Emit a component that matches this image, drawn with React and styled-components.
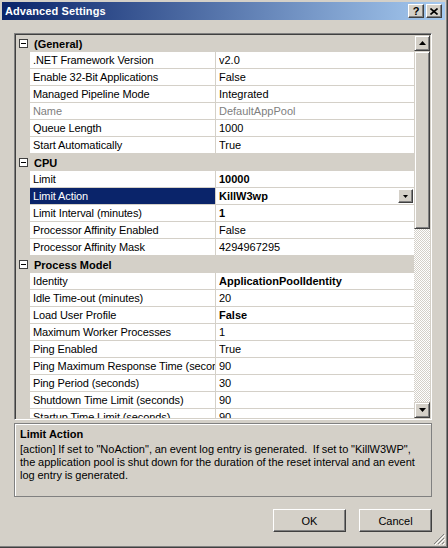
import React from "react";
import styled, { createGlobalStyle } from "styled-components";

const sections = [
  {
    title: "(General)",
    rows: [
      { name: ".NET Framework Version", value: "v2.0" },
      { name: "Enable 32-Bit Applications", value: "False" },
      { name: "Managed Pipeline Mode", value: "Integrated" },
      { name: "Name", value: "DefaultAppPool", disabled: true },
      { name: "Queue Length", value: "1000" },
      { name: "Start Automatically", value: "True" },
    ],
  },
  {
    title: "CPU",
    rows: [
      { name: "Limit", value: "10000", bold: true },
      { name: "Limit Action", value: "KillW3wp", bold: true, selected: true },
      { name: "Limit Interval (minutes)", value: "1", bold: true },
      { name: "Processor Affinity Enabled", value: "False" },
      { name: "Processor Affinity Mask", value: "4294967295" },
    ],
  },
  {
    title: "Process Model",
    rows: [
      { name: "Identity", value: "ApplicationPoolIdentity", bold: true },
      { name: "Idle Time-out (minutes)", value: "20" },
      { name: "Load User Profile", value: "False", bold: true },
      { name: "Maximum Worker Processes", value: "1" },
      { name: "Ping Enabled", value: "True" },
      { name: "Ping Maximum Response Time (seconds)", value: "90" },
      { name: "Ping Period (seconds)", value: "30" },
      { name: "Shutdown Time Limit (seconds)", value: "90" },
      { name: "Startup Time Limit (seconds)", value: "90" },
    ],
  },
];

const GlobalStyle = createGlobalStyle`
  body {
    margin: 0;
    background: #d4d0c8;
    font-family: "Liberation Sans", Arial, sans-serif;
    font-size: 11px;
  }
`;

const ArrowUp = () => (
  <svg width="7" height="4" viewBox="0 0 7 4">
    <path d="M3.5 0 L7 4 L0 4 Z" fill="#000" />
  </svg>
);

const ArrowDown = ({ size = 7 }) => (
  <svg width={size} height={Math.ceil(size / 2)} viewBox="0 0 7 4">
    <path d="M0 0 L7 0 L3.5 4 Z" fill="#000" />
  </svg>
);

const App = () => {
  return (
    <>
      <GlobalStyle />
      <Window>
        <TitleBar>
          <Title>Advanced Settings</Title>
          <TitleButtons>
            <CaptionButton>?</CaptionButton>
            <CaptionButton>
              <svg width="8" height="7" viewBox="0 0 8 7">
                <path d="M0.5 0.5 L7.5 6.5 M7.5 0.5 L0.5 6.5" stroke="#000" strokeWidth="1.6" />
              </svg>
            </CaptionButton>
          </TitleButtons>
        </TitleBar>

        <Body>
          <Grid>
            <Rows>
              {sections.map((section) => (
                <React.Fragment key={section.title}>
                  <CategoryRow>
                    <Margin>
                      <Toggle />
                    </Margin>
                    <CategoryLabel>{section.title}</CategoryLabel>
                  </CategoryRow>
                  {section.rows.map((row) => (
                    <PropRow key={row.name}>
                      <Margin />
                      <NameCell $selected={row.selected} $disabled={row.disabled}>
                        {row.name}
                      </NameCell>
                      <ValueCell $bold={row.bold} $disabled={row.disabled}>
                        <ValueText>{row.value}</ValueText>
                        {row.selected && (
                          <DropButton>
                            <ArrowDown size={5} />
                          </DropButton>
                        )}
                      </ValueCell>
                    </PropRow>
                  ))}
                </React.Fragment>
              ))}
            </Rows>
            <ScrollBar>
              <ScrollButton>
                <ArrowUp />
              </ScrollButton>
              <Thumb />
              <Track />
              <ScrollButton>
                <ArrowDown />
              </ScrollButton>
            </ScrollBar>
          </Grid>

          <Description>
            <DescTitle>Limit Action</DescTitle>
            <DescText>
              [action] If set to "NoAction", an event log entry is generated.&nbsp; If set to "KillW3WP",
              the application pool is shut down for the duration of the reset interval and an event
              log entry is generated.
            </DescText>
          </Description>

          <Footer>
            <Button>OK</Button>
            <Button>Cancel</Button>
          </Footer>
        </Body>
        <Grip>
          <svg width="12" height="12" viewBox="0 0 12 12">
            <path d="M11 1 L1 11 M11 5 L5 11 M11 9 L9 11" stroke="#808080" strokeWidth="1" />
            <path d="M12 2 L2 12 M12 6 L6 12 M12 10 L10 12" stroke="#fff" strokeWidth="1" />
          </svg>
        </Grip>
      </Window>
    </>
  );
};

const Window = styled.div`
  position: relative;
  width: 448px;
  height: 548px;
  box-sizing: border-box;
  border-right: 1px solid #404040;
  border-bottom: 1px solid #404040;
  box-shadow: inset -1px -1px 0 #808080;
  background: #d4d0c8;
  display: flex;
  flex-direction: column;
  overflow: hidden;
`;

const TitleBar = styled.div`
  height: 18px;
  margin: 2px 2px 0 2px;
  display: flex;
  align-items: center;
  justify-content: space-between;
  padding: 0 3px 0 3px;
  background: linear-gradient(to right, #0a246a 0%, #a6caf0 100%);
`;

const Title = styled.div`
  color: #fff;
  font-weight: bold;
  font-size: 11px;
  letter-spacing: 0.1px;
`;

const TitleButtons = styled.div`
  display: flex;
  gap: 2px;
`;

const CaptionButton = styled.div`
  width: 16px;
  height: 14px;
  box-sizing: border-box;
  background: #d4d0c8;
  border-top: 1px solid #fff;
  border-left: 1px solid #fff;
  border-right: 1px solid #404040;
  border-bottom: 1px solid #404040;
  box-shadow: inset -1px -1px 0 #808080;
  display: flex;
  align-items: center;
  justify-content: center;
  font-weight: bold;
  font-size: 11px;
  color: #000;
`;

const Body = styled.div`
  flex: 1;
  display: flex;
  flex-direction: column;
  padding: 13px 15px 0 14px;
`;

const Grid = styled.div`
  height: 387px;
  box-sizing: border-box;
  border-top: 1px solid #808080;
  border-left: 1px solid #808080;
  border-right: 1px solid #fff;
  border-bottom: 1px solid #fff;
  box-shadow: inset 1px 1px 0 #404040, inset -1px -1px 0 #d4d0c8;
  padding: 1px;
  display: flex;
  background: #fff;
`;

const Rows = styled.div`
  flex: 1;
  overflow: hidden;
  display: flex;
  flex-direction: column;
`;

const CategoryRow = styled.div`
  height: 17px;
  flex-shrink: 0;
  display: flex;
  align-items: center;
  background: #d4d0c8;
`;

const Margin = styled.div`
  width: 14px;
  flex-shrink: 0;
  align-self: stretch;
  background: #d4d0c8;
  display: flex;
  align-items: center;
  justify-content: center;
`;

const Toggle = styled.div`
  position: relative;
  width: 9px;
  height: 9px;
  box-sizing: border-box;
  border: 1px solid #404040;
  background: #fff;

  &::after {
    content: "";
    position: absolute;
    left: 1px;
    right: 1px;
    top: 3px;
    height: 1px;
    background: #000;
  }
`;

const CategoryLabel = styled.div`
  font-weight: bold;
  padding-left: 4px;
  color: #000;
`;

const PropRow = styled.div`
  height: 17px;
  flex-shrink: 0;
  display: flex;
  box-sizing: border-box;
`;

const NameCell = styled.div`
  width: 186px;
  flex-shrink: 0;
  box-sizing: border-box;
  padding: 0 0 0 3px;
  line-height: 16px;
  letter-spacing: -0.1px;
  white-space: nowrap;
  overflow: hidden;
  border-bottom: 1px solid #d4d0c8;
  border-right: 1px solid #d4d0c8;
  background: ${(p) => (p.$selected ? "#0a246a" : "#fff")};
  color: ${(p) => (p.$selected ? "#fff" : p.$disabled ? "#808080" : "#000")};
`;

const ValueCell = styled.div`
  flex: 1;
  min-width: 0;
  display: flex;
  align-items: center;
  box-sizing: border-box;
  padding-left: 3px;
  border-bottom: 1px solid #d4d0c8;
  background: #fff;
  font-weight: ${(p) => (p.$bold ? "bold" : "normal")};
  color: ${(p) => (p.$disabled ? "#808080" : "#000")};
`;

const ValueText = styled.span`
  flex: 1;
  white-space: nowrap;
  overflow: hidden;
  line-height: 16px;
`;

const DropButton = styled.div`
  width: 15px;
  height: 14px;
  box-sizing: border-box;
  margin-right: 1px;
  background: #d4d0c8;
  border-top: 1px solid #fff;
  border-left: 1px solid #fff;
  border-right: 1px solid #404040;
  border-bottom: 1px solid #404040;
  box-shadow: inset -1px -1px 0 #808080;
  display: flex;
  align-items: center;
  justify-content: center;
`;

const ScrollBar = styled.div`
  width: 16px;
  flex-shrink: 0;
  display: flex;
  flex-direction: column;
`;

const ScrollButton = styled.div`
  height: 16px;
  flex-shrink: 0;
  box-sizing: border-box;
  background: #d4d0c8;
  border-top: 1px solid #d4d0c8;
  border-left: 1px solid #d4d0c8;
  border-right: 1px solid #404040;
  border-bottom: 1px solid #404040;
  box-shadow: inset 1px 1px 0 #fff, inset -1px -1px 0 #808080;
  display: flex;
  align-items: center;
  justify-content: center;
`;

const Thumb = styled(ScrollButton)`
  height: 178px;
`;

const Track = styled.div`
  flex: 1;
  background-color: #fff;
  background-image: conic-gradient(#d4d0c8 25%, #fff 0 50%, #d4d0c8 0 75%, #fff 0);
  background-size: 2px 2px;
`;

const Description = styled.div`
  margin-top: 3px;
  height: 74px;
  box-sizing: border-box;
  border: 1px solid #808080;
  box-shadow: inset 1px 1px 0 #fff;
  padding: 3px 5px;
  color: #000;
`;

const DescTitle = styled.div`
  font-weight: bold;
  line-height: 14px;
  margin-bottom: 2px;
`;

const DescText = styled.div`
  line-height: 13px;
  word-spacing: -0.3px;
`;

const Footer = styled.div`
  display: flex;
  justify-content: flex-end;
  gap: 13px;
  margin-top: 12px;
`;

const Button = styled.div`
  width: 73px;
  height: 23px;
  box-sizing: border-box;
  background: #d4d0c8;
  border-top: 1px solid #fff;
  border-left: 1px solid #fff;
  border-right: 1px solid #404040;
  border-bottom: 1px solid #404040;
  box-shadow: inset -1px -1px 0 #808080;
  display: flex;
  align-items: center;
  justify-content: center;
  color: #000;
`;

const Grip = styled.div`
  position: absolute;
  right: 2px;
  bottom: 2px;
  width: 12px;
  height: 12px;
  line-height: 0;
`;

export default App;
